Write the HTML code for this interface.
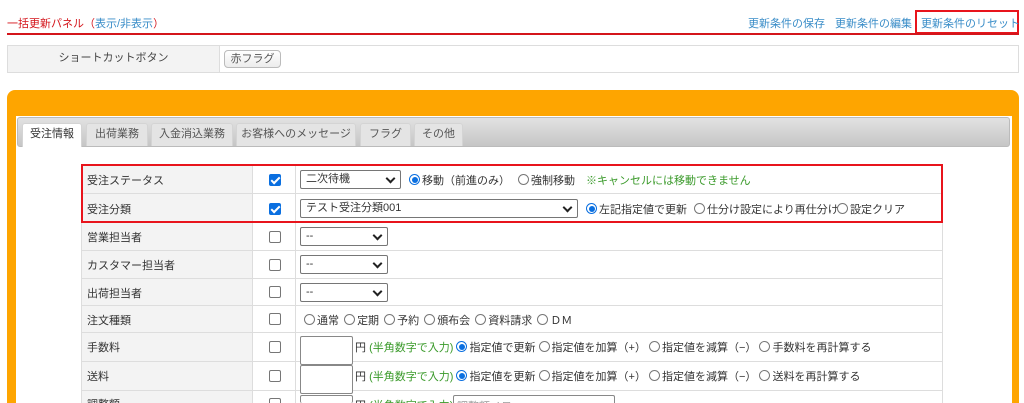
<!DOCTYPE html>
<html><head><meta charset="utf-8"><style>
*{box-sizing:border-box;margin:0;padding:0}
html,body{width:1024px;height:403px;overflow:hidden}
body{background:#fff;font-family:"Liberation Sans","Noto Sans CJK JP",sans-serif;font-size:11px;color:#333;position:relative}
.a{position:absolute;white-space:nowrap}
.lnk{color:#3a8dc8}
.sel{position:absolute;height:19px;border:1px solid #767676;border-radius:2px;background:#fff;font-size:11px;padding:2px 5px;line-height:13px}
.sel:after{content:"";position:absolute;right:6px;top:4px;width:5px;height:5px;border-right:2px solid #222;border-bottom:2px solid #222;transform:rotate(45deg)}
.cb{position:absolute;width:12px;height:12px;border:1px solid #767676;border-radius:2px;background:#fff}
.cb.on{background:#0a6fe0;border-color:#0a6fe0}
.cb.on:after{content:"";position:absolute;left:3px;top:0px;width:3px;height:7px;border-right:2px solid #fff;border-bottom:2px solid #fff;transform:rotate(45deg)}
.r{display:inline-block;width:11px;height:11px;border:1px solid #777;border-radius:50%;vertical-align:-1px;margin-right:2px;background:#fff;position:relative}
.r.on{border-color:#0a6fe0}
.r.on:after{content:"";position:absolute;left:1.5px;top:1.5px;width:6px;height:6px;border-radius:50%;background:#0a6fe0}
.inp{position:absolute;width:53px;height:29px;border:1px solid #888;border-radius:2px;background:#fff}
.g{color:#3a9a2a}
.tab{position:absolute;top:123px;height:23px;background:#e4e4e4;border:1px solid #d4d4d4;border-bottom:none;border-radius:3px 3px 0 0;color:#555;text-align:center;line-height:21px;font-size:11px}
</style></head><body>
<div class="a" style="left:7px;top:15px;color:#d4151b">一括更新パネル（<span class="lnk">表示/非表示</span>）</div>
<div class="a lnk" style="left:748px;top:15px">更新条件の保存</div>
<div class="a lnk" style="left:835px;top:15px">更新条件の編集</div>
<div class="a" style="left:915px;top:10px;width:104px;height:24px;border:2px solid #e8141c"></div>
<div class="a lnk" style="left:921px;top:15px">更新条件のリセット</div>
<div class="a" style="left:7px;top:33px;width:1012px;height:2px;background:#d4151b"></div>

<div class="a" style="left:7px;top:45px;width:1012px;height:28px;border:1px solid #ddd"></div>
<div class="a" style="left:8px;top:46px;width:212px;height:26px;background:#f3f3f3;border-right:1px solid #ddd;text-align:center;line-height:24px;color:#444">ショートカットボタン</div>
<div class="a" style="left:224px;top:50px;width:57px;height:18px;border:1px solid #bbb;border-radius:4px;background:linear-gradient(#fff,#ececec);text-align:center;line-height:16px;color:#555">赤フラグ</div>

<div class="a" style="left:7px;top:90px;width:1012px;height:313px;background:#fea500;border-radius:8px 8px 0 0"></div>
<div class="a" style="left:16px;top:116px;width:996px;height:287px;background:#fff"></div>
<div class="a" style="left:17px;top:117px;width:993px;height:30px;background:linear-gradient(#e2e2e2,#c6c6c6);border:1px solid #bbb;border-radius:3px"></div>
<div class="tab" style="left:22px;width:60px;background:#fff;color:#333;height:24px">受注情報</div>
<div class="tab" style="left:86px;width:62px">出荷業務</div>
<div class="tab" style="left:151px;width:82px">入金消込業務</div>
<div class="tab" style="left:236px;width:120px">お客様へのメッセージ</div>
<div class="tab" style="left:360px;width:51px">フラグ</div>
<div class="tab" style="left:414px;width:49px">その他</div>

<div class="a" style="left:81px;top:164px;width:862px;height:239px;border-left:1px solid #ddd;border-right:1px solid #ddd"></div>
<div class="a" style="left:82px;top:164px;width:171px;height:239px;background:#f3f3f3;border-right:1px solid #ddd"></div>
<div class="a" style="left:295px;top:164px;width:1px;height:239px;background:#ddd"></div>
<div class="a" style="left:81px;top:193px;width:862px;height:1px;background:#ddd"></div>
<div class="a" style="left:81px;top:250px;width:862px;height:1px;background:#ddd"></div>
<div class="a" style="left:81px;top:278px;width:862px;height:1px;background:#ddd"></div>
<div class="a" style="left:81px;top:305px;width:862px;height:1px;background:#ddd"></div>
<div class="a" style="left:81px;top:332px;width:862px;height:1px;background:#ddd"></div>
<div class="a" style="left:81px;top:361px;width:862px;height:1px;background:#ddd"></div>
<div class="a" style="left:81px;top:390px;width:862px;height:1px;background:#ddd"></div>
<div class="a" style="left:81px;top:164px;width:862px;height:59px;border:2px solid #e8141c"></div>

<div class="a" style="left:87px;top:172px">受注ステータス</div>
<div class="a" style="left:87px;top:201px">受注分類</div>
<div class="a" style="left:87px;top:229px">営業担当者</div>
<div class="a" style="left:87px;top:257px">カスタマー担当者</div>
<div class="a" style="left:87px;top:285px">出荷担当者</div>
<div class="a" style="left:87px;top:312px">注文種類</div>
<div class="a" style="left:87px;top:339px">手数料</div>
<div class="a" style="left:87px;top:368px">送料</div>
<div class="a" style="left:87px;top:396px;height:7px;overflow:hidden">調整額</div>

<div class="cb on" style="left:269px;top:174px"></div>
<div class="cb on" style="left:269px;top:203px"></div>
<div class="cb" style="left:269px;top:231px"></div>
<div class="cb" style="left:269px;top:259px"></div>
<div class="cb" style="left:269px;top:286px"></div>
<div class="cb" style="left:269px;top:313px"></div>
<div class="cb" style="left:269px;top:341px"></div>
<div class="cb" style="left:269px;top:370px"></div>
<div class="cb" style="left:269px;top:398px;height:5px;border-bottom:none;border-radius:2px 2px 0 0"></div>

<div class="sel" style="left:300px;top:170px;width:101px">二次待機</div>
<div class="a" style="left:409px;top:172px"><span class="r on"></span>移動（前進のみ）</div>
<div class="a" style="left:518px;top:172px"><span class="r"></span>強制移動</div>
<div class="a g" style="left:586px;top:172px">※キャンセルには移動できません</div>

<div class="sel" style="left:300px;top:199px;width:278px">テスト受注分類001</div>
<div class="a" style="left:586px;top:201px"><span class="r on"></span>左記指定値で更新</div>
<div class="a" style="left:694px;top:201px"><span class="r"></span>仕分け設定により再仕分け</div>
<div class="a" style="left:837px;top:201px"><span class="r"></span>設定クリア</div>

<div class="sel" style="left:300px;top:227px;width:88px">--</div>
<div class="sel" style="left:300px;top:255px;width:88px">--</div>
<div class="sel" style="left:300px;top:283px;width:88px">--</div>

<div class="a" style="left:304px;top:312px;word-spacing:2px"><span class="r"></span>通常 <span class="r"></span>定期 <span class="r"></span>予約 <span class="r"></span>頒布会 <span class="r"></span>資料請求 <span class="r"></span>ＤＭ</div>

<div class="inp" style="left:300px;top:336px"></div>
<div class="a" style="left:355px;top:339px">円 <span class="g">(半角数字で入力)</span> <span class="r on"></span>指定値で更新 <span class="r"></span>指定値を加算（+） <span class="r"></span>指定値を減算（−） <span class="r"></span>手数料を再計算する</div>
<div class="inp" style="left:300px;top:365px"></div>
<div class="a" style="left:355px;top:368px">円 <span class="g">(半角数字で入力)</span> <span class="r on"></span>指定値を更新 <span class="r"></span>指定値を加算（+） <span class="r"></span>指定値を減算（−） <span class="r"></span>送料を再計算する</div>
<div class="inp" style="left:300px;top:395px;height:8px;border-bottom:none"></div>
<div class="a" style="left:355px;top:397px;height:6px;overflow:hidden">円 <span class="g">(半角数字で入力)</span></div>
<div class="a" style="left:453px;top:395px;width:162px;height:8px;border:1px solid #888;border-bottom:none;border-radius:2px 2px 0 0;background:#fff;color:#999;padding:2px 3px;overflow:hidden">調整額メモ</div>
</body></html>
